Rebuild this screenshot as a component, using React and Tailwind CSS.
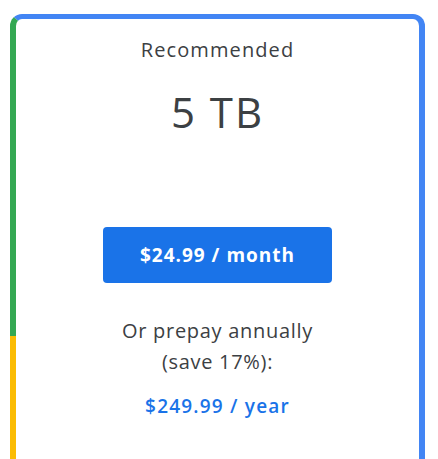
export default function App() {
  return (
    <div className="min-h-screen bg-white pt-[14px] pl-[10px] pr-[13px] overflow-hidden" style={{ fontFamily: "'Open Sans', Arial, sans-serif" }}>
      <div className="relative h-[460px] rounded-t-[12px] border-t-[5px] border-r-[6px] border-l-[6px] border-t-[#4285f4] border-r-[#4285f4] border-l-[#34a853] bg-white">
        {/* yellow lower part of left edge */}
        <div className="absolute left-[-6px] top-[317px] bottom-0 w-[6px] bg-[#fbbc04]" />
        <div className="flex flex-col items-center text-[#3c4043]">
          <p className="mt-[19px] text-[20px] leading-[24px] font-medium tracking-[1.1px]">Recommended</p>
          <p className="mt-[29px] text-[42px] leading-none tracking-[2px]">5 TB</p>
          <button className="mt-[94px] w-[229px] h-[56px] rounded-[4px] bg-[#1a73e8] text-white text-[19px] font-bold tracking-[1px]">
            $24.99 / month
          </button>
          <p className="mt-[32px] text-[20px] leading-[31px] text-center tracking-[0.7px]">
            Or prepay annually
            <br />
            (save 17%):
          </p>
          <p className="mt-[15px] text-[19px] leading-[28px] font-semibold text-[#1a73e8] tracking-[1.2px]">$249.99 / year</p>
        </div>
      </div>
    </div>
  );
}
